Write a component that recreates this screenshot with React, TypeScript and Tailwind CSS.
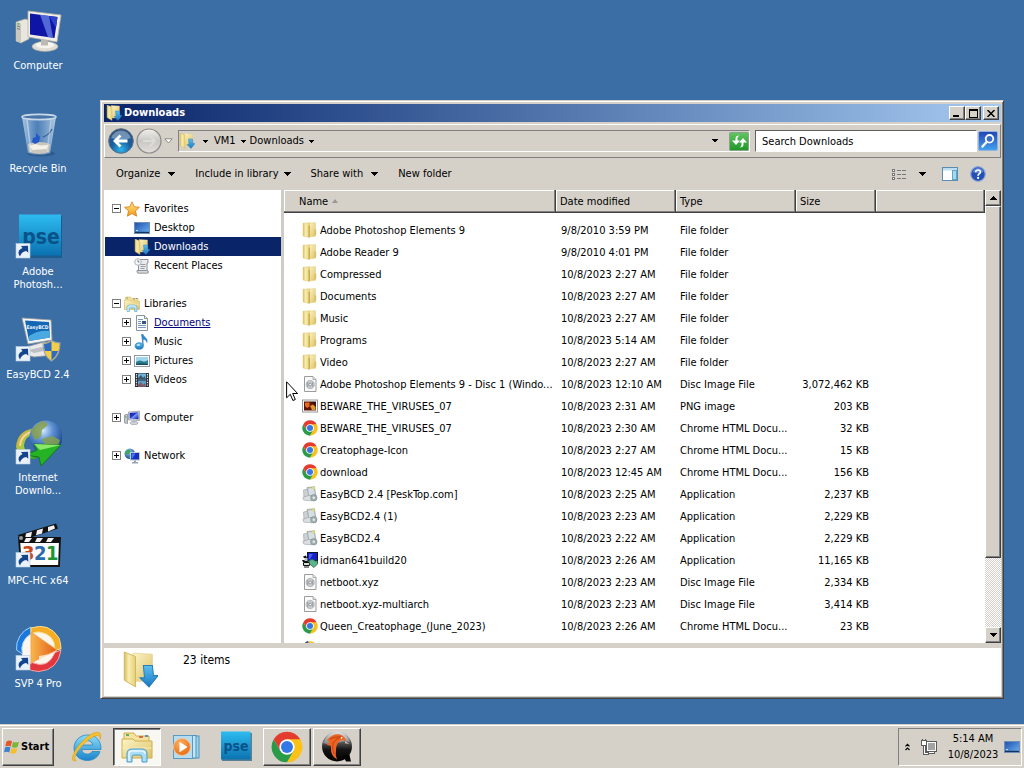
import React from 'react';

type IconProps = { className?: string };

/* ---------- shared gradients ---------- */

function Gradients() {
  return (
    <svg className="absolute h-0 w-0" aria-hidden="true">
      <defs>
        <linearGradient id="folderFront" x1="0" y1="0" x2="1" y2="0">
          <stop offset="0" stopColor="#d9bd57" />
          <stop offset="0.4" stopColor="#f8eeb4" />
          <stop offset="1" stopColor="#e6cf73" />
        </linearGradient>
        <linearGradient id="folderBack" x1="0" y1="0" x2="1" y2="1">
          <stop offset="0" stopColor="#fdf5c8" />
          <stop offset="1" stopColor="#ddc266" />
        </linearGradient>
        <linearGradient id="arrowBlue" x1="0" y1="0" x2="0" y2="1">
          <stop offset="0" stopColor="#5cc0ee" />
          <stop offset="1" stopColor="#1878c4" />
        </linearGradient>
        <linearGradient id="screenBlue" x1="0" y1="0" x2="1" y2="1">
          <stop offset="0" stopColor="#0a10a8" />
          <stop offset="0.45" stopColor="#2740d0" />
          <stop offset="0.5" stopColor="#7d9cf4" />
          <stop offset="1" stopColor="#0b12a0" />
        </linearGradient>
        <linearGradient id="deskBlue" x1="0" y1="0" x2="1" y2="1">
          <stop offset="0" stopColor="#1d4fae" />
          <stop offset="1" stopColor="#6db4f2" />
        </linearGradient>
        <linearGradient id="pseBlue" x1="0" y1="0" x2="0" y2="1">
          <stop offset="0" stopColor="#2dbcf0" />
          <stop offset="1" stopColor="#0a72b0" />
        </linearGradient>
        <linearGradient id="glass" x1="0" y1="0" x2="1" y2="0">
          <stop offset="0" stopColor="#bcd4ea" stopOpacity="0.85" />
          <stop offset="0.45" stopColor="#5b8cc4" stopOpacity="0.6" />
          <stop offset="1" stopColor="#c6daec" stopOpacity="0.85" />
        </linearGradient>
        <radialGradient id="backBall" cx="0.5" cy="0.85" r="0.8">
          <stop offset="0" stopColor="#2fb4ea" />
          <stop offset="0.5" stopColor="#1a5fa0" />
          <stop offset="1" stopColor="#2b4f7c" />
        </radialGradient>
        <linearGradient id="forwardBall" x1="0" y1="0" x2="0" y2="1">
          <stop offset="0" stopColor="#f1f0ee" />
          <stop offset="0.5" stopColor="#c9c7c4" />
          <stop offset="1" stopColor="#e2e0dd" />
        </linearGradient>
        <radialGradient id="globe" cx="0.4" cy="0.3" r="0.75">
          <stop offset="0" stopColor="#d7ecff" />
          <stop offset="0.4" stopColor="#5f92d4" />
          <stop offset="1" stopColor="#123a86" />
        </radialGradient>
        <linearGradient id="idmSwoosh" x1="0" y1="0" x2="1" y2="1">
          <stop offset="0" stopColor="#f39a4a" />
          <stop offset="0.5" stopColor="#9dd23c" />
          <stop offset="1" stopColor="#1c9a24" />
        </linearGradient>
        <linearGradient id="searchBlue" x1="0" y1="0" x2="0" y2="1">
          <stop offset="0" stopColor="#2344b4" />
          <stop offset="1" stopColor="#43a4ee" />
        </linearGradient>
        <linearGradient id="refreshGreen" x1="0" y1="0" x2="0" y2="1">
          <stop offset="0" stopColor="#63c563" />
          <stop offset="1" stopColor="#1d9626" />
        </linearGradient>
        <linearGradient id="star" x1="0" y1="0" x2="0" y2="1">
          <stop offset="0" stopColor="#ffe98c" />
          <stop offset="1" stopColor="#f59a17" />
        </linearGradient>
        <radialGradient id="orange" cx="0.4" cy="0.3" r="0.8">
          <stop offset="0" stopColor="#ffb060" />
          <stop offset="1" stopColor="#e46408" />
        </radialGradient>
        <linearGradient id="darkBall" x1="0" y1="0" x2="0" y2="1">
          <stop offset="0" stopColor="#d8d8d8" />
          <stop offset="0.35" stopColor="#5a5a5a" />
          <stop offset="0.6" stopColor="#151515" />
          <stop offset="1" stopColor="#000" />
        </linearGradient>
        <linearGradient id="ieBlue" x1="0" y1="0" x2="0" y2="1">
          <stop offset="0" stopColor="#8adcf8" />
          <stop offset="1" stopColor="#1a84cc" />
        </linearGradient>
        <linearGradient id="svpPlay" x1="0" y1="0" x2="1" y2="0">
          <stop offset="0" stopColor="#f9b64c" />
          <stop offset="1" stopColor="#e35b16" />
        </linearGradient>
      </defs>
    </svg>
  );
}

/* ---------- 16px icons ---------- */

function FolderIcon({ className = 'h-4 w-4' }: IconProps) {
  return (
    <svg viewBox="0 0 16 16" className={className} aria-hidden="true">
      <path d="M7 1l6.500-.4v13.600L7 15z" fill="url(#folderBack)" stroke="#e0cc84" strokeWidth=".5" />
      <path d="M12.500 7.500h1.700v5l-1.700 1.500z" fill="#d9c062" />
      <path d="M1 1.200L7.500.8v14.700L1 14z" fill="url(#folderFront)" stroke="#dcc87c" strokeWidth=".5" />
      <path d="M6.500 4l1.500-.6v11.400l-1.500.7z" fill="#c9ae4e" />
    </svg>
  );
}

function DownloadFolderIcon({ className = 'h-4 w-4' }: IconProps) {
  return (
    <svg viewBox="0 0 32 32" className={className} aria-hidden="true">
      <path d="M10 1l17 1v24H12z" fill="url(#folderBack)" stroke="#e2cd84" strokeWidth=".6" />
      <path d="M2 0l10 4v27L2 25z" fill="url(#folderFront)" stroke="#cdb45c" strokeWidth=".8" />
      <path d="M19 12h8l1 9h4l-8 10-8-8h4z" fill="url(#arrowBlue)" stroke="#2a7db8" strokeWidth=".9" />
    </svg>
  );
}

function StarIcon() {
  return (
    <svg viewBox="0 0 16 16" className="h-4 w-4" aria-hidden="true">
      <path d="M8 .8l2.200 4.900 5.200.6-3.900 3.600 1.100 5.300L8 12.500l-4.600 2.700 1.100-5.300L.6 6.300l5.200-.6z" fill="url(#star)" stroke="#d27a12" strokeWidth=".8" />
    </svg>
  );
}

function DesktopIcon({ className = 'h-4 w-4' }: IconProps) {
  return (
    <svg viewBox="0 0 16 16" className={className} aria-hidden="true">
      <rect x=".5" y="2.500" width="15" height="11" fill="url(#deskBlue)" stroke="#6f8fb4" />
      <path d="M1 12.400h14" stroke="#16335f" strokeWidth="1.200" />
      <path d="M2 10.600h2" stroke="#cde4fb" />
    </svg>
  );
}

function RecentIcon() {
  return (
    <svg viewBox="0 0 16 16" className="h-4 w-4" aria-hidden="true">
      <path d="M5.500 1.500h8.500v3.500h-1v9H4.500V6z" fill="#e9ecef" stroke="#8d9298" />
      <path d="M6.500 6.500h5M6.500 8.500h5M6.500 10.500h4" stroke="#979ca2" />
      <path d="M3 12.500h9.500q2 0 2 1.500t-2 1.200H4q-1.500-.5-1-2.700z" fill="#d6d9dc" stroke="#7c8085" strokeWidth=".8" />
      <circle cx="4" cy="4" r="3.300" fill="#f6f7f8" stroke="#a5acb3" strokeWidth=".9" />
      <path d="M4 2.200V4h1.500" fill="none" stroke="#5a6066" strokeWidth=".8" />
    </svg>
  );
}

function LibraryIcon({ className = 'h-4 w-4' }: IconProps) {
  return (
    <svg viewBox="0 0 32 32" className={className} aria-hidden="true">
      <path d="M3 5V2h10l2 3h13v6H3z" fill="#f3e3a0" stroke="#cfae4a" />
      <path d="M5 4h3" stroke="#3fa04b" strokeWidth="1.600" />
      <path d="M18 6h4" stroke="#c8553c" strokeWidth="1.600" />
      <path d="M24 5h3" stroke="#3f82c8" strokeWidth="1.600" />
      <path d="M1 11V8h11l2 2h17v17H1z" fill="url(#folderBack)" stroke="#cfae4a" />
      <path d="M1.500 17h29" stroke="#f7eebf" />
      <path d="M6 31v-8q0-5 5-5h10q5 0 5 5v8h-5v-5q0-2-2-2h-6q-2 0-2 2v5z" fill="#a9def7" stroke="#4a9bcc" />
      <path d="M8 30v-7q0-3 3-3h10q3 0 3 3" fill="none" stroke="#e6f7ff" strokeWidth="1.500" />
    </svg>
  );
}

function DocumentIcon() {
  return (
    <svg viewBox="0 0 16 16" className="h-4 w-4" aria-hidden="true">
      <path d="M2.500.5h8l3 3v12h-11z" fill="#fbfcfd" stroke="#8a949e" />
      <path d="M10.500.5v3h3" fill="#dfe6ee" stroke="#8a949e" />
      <path d="M4 4.500h5M4 6.500h3M4 8.500h3M4 10.500h8M4 12.500h8" stroke="#7f96b8" />
      <rect x="8" y="6" width="4" height="3" fill="#39527e" />
    </svg>
  );
}

function MusicIcon() {
  return (
    <svg viewBox="0 0 16 16" className="h-4 w-4" aria-hidden="true">
      <path d="M7.500.3h1.600c.3 2.800 4.900 3.500 3.900 8.200-.5-2-1.800-3-3.900-3.200v6.500z" fill="#2f8fd0" stroke="#226ca8" strokeWidth=".5" />
      <ellipse cx="5.200" cy="12" rx="4.100" ry="3.300" fill="url(#arrowBlue)" stroke="#226ca8" strokeWidth=".6" />
      <ellipse cx="4.400" cy="11" rx="1.700" ry="1" fill="#bfe8fb" />
    </svg>
  );
}

function PicturesIcon() {
  return (
    <svg viewBox="0 0 16 16" className="h-4 w-4" aria-hidden="true">
      <rect x=".5" y="2.500" width="15" height="11" fill="#fff" stroke="#8f9aa4" />
      <rect x="2" y="4" width="12" height="8" fill="#9fd6ee" />
      <path d="M2 9q3-2.500 6-1t6-1v5H2z" fill="#2c7f8c" />
      <path d="M2 11q4-1.500 12 0v1H2z" fill="#175064" />
    </svg>
  );
}

function VideosIcon() {
  return (
    <svg viewBox="0 0 16 16" className="h-4 w-4" aria-hidden="true">
      <rect x="1" y="1" width="14" height="14" fill="#2b2f36" />
      <rect x="4" y="1.500" width="8" height="6" fill="#6fb4d8" />
      <path d="M4 6l3-3 2 3 1.500-2L12 7.500H4z" fill="#3a5568" />
      <rect x="4" y="8.500" width="8" height="6" fill="#5aa0c8" />
      <path d="M4 13l3-3 2 3 1.500-2 1.500 3.500H4z" fill="#8c5560" />
      <path d="M2.500 2v12M13.500 2v12" stroke="#e8ecef" strokeWidth="1.200" strokeDasharray="1.400 1.200" />
    </svg>
  );
}

function SmallComputerIcon() {
  return (
    <svg viewBox="0 0 16 16" className="h-4 w-4" aria-hidden="true">
      <path d="M.5 5l3-.8v9.300l-3-.6z" fill="#c5c9cd" stroke="#7d8288" strokeWidth=".7" />
      <path d="M1 7h1.500" stroke="#3f9d4c" />
      <path d="M4.500 2l11-.8v9.300l-11-.6z" fill="#d9dde4" stroke="#8b90a0" strokeWidth=".7" />
      <path d="M5.700 3l8.800-.7v7l-8.800-.5z" fill="url(#screenBlue)" />
      <ellipse cx="10" cy="13" rx="4" ry="1.600" fill="#d5d8de" stroke="#8b90a0" strokeWidth=".6" />
      <path d="M8.700 10.300h2.600v2.400H8.700z" fill="#b2b7c4" />
    </svg>
  );
}

function NetworkIcon() {
  return (
    <svg viewBox="0 0 16 16" className="h-4 w-4" aria-hidden="true">
      <circle cx="5.800" cy="5.800" r="5.300" fill="url(#globe)" />
      <path d="M2 3q3-3 5 0L5 6 1 7zM4 9l3-1v3z" fill="#3ba85a" />
      <rect x="6.500" y="4.500" width="9" height="7.500" fill="#1231c0" stroke="#c4cad6" />
      <path d="M7.500 5.500h4l-3 5h-1z" fill="#4a76ee" />
      <path d="M10 12.500h2v1.500h2v1.500H8V14h2z" fill="#9aa3b2" />
    </svg>
  );
}

function DiscImageIcon() {
  return (
    <svg viewBox="0 0 16 16" className="h-4 w-4" aria-hidden="true">
      <path d="M2.500.5h8.500l3 3v12H2.500z" fill="#fafafa" stroke="#9c9c9c" />
      <path d="M11 .5v3h3" fill="#e4e4e4" stroke="#9c9c9c" strokeWidth=".8" />
      <circle cx="8.200" cy="8.500" r="4.200" fill="#c6cacd" stroke="#a2a6aa" strokeWidth=".6" />
      <path d="M5.500 6.200q1 2.300 0 4.600M11 6.200q-1 2.300 0 4.600" stroke="#92979b" fill="none" />
      <circle cx="8.200" cy="8.500" r="1.300" fill="#fff" stroke="#777c81" strokeWidth=".7" />
    </svg>
  );
}

function PngIcon() {
  return (
    <svg viewBox="0 0 16 16" className="h-4 w-4" aria-hidden="true">
      <rect x=".5" y="2" width="15" height="12" fill="#fff" stroke="#9a9a9a" />
      <rect x="2" y="3.500" width="12" height="9" fill="#5c1407" />
      <path d="M3 4.500h4.500v4L5 10l-2-2z" fill="#e46a1c" />
      <path d="M8 8l3-1.500L13.500 9v3H10z" fill="#e0972f" />
      <path d="M9.500 4h4v3z" fill="#25130b" />
    </svg>
  );
}

function ChromeIcon({ className = 'h-4 w-4' }: IconProps) {
  return (
    <svg viewBox="0 0 48 48" className={className} aria-hidden="true">
      <path d="M24 24L4.080 12.500A23 23 0 0143.920 12.500z" fill="#e33b2e" />
      <path d="M24 24V12.500H43.920A23 23 0 0124 47L34 29.700z" fill="#fbc116" />
      <path d="M24 24l10 5.750L24 47A23 23 0 014.080 12.500L14 29.750z" fill="#2a9c48" />
      <path d="M4.080 12.500L14 29.750 24 12.500H10z" fill="#e33b2e" />
      <circle cx="24" cy="24" r="11.500" fill="#fff" />
      <circle cx="24" cy="24" r="9" fill="#3478e8" />
    </svg>
  );
}

function InstallerIcon() {
  return (
    <svg viewBox="0 0 16 16" className="h-4 w-4" aria-hidden="true">
      <path d="M5 1.500L12.500.7l1.300 9.500L6 11z" fill="#b9c2b4" stroke="#8b958c" strokeWidth=".6" />
      <path d="M6 2.500l5.800-.6.9 6.600-5.700.7z" fill="#d6dfe6" />
      <path d="M9.500 1l3-.3.500 2.500-2 .3z" fill="#ddd774" />
      <path d="M1.500 4l4-.8 1.300 8L2 11.500z" fill="#ccd1d4" stroke="#959da3" strokeWidth=".6" />
      <path d="M.8 11.500l6-2.200 7 2.200-4.500 3.300-7.500-.7z" fill="#dcdfe2" stroke="#959da3" strokeWidth=".6" />
      <circle cx="11.800" cy="11.800" r="3.200" fill="#9fb0b4" stroke="#76848c" strokeWidth=".6" />
      <circle cx="11.800" cy="11.800" r="1.200" fill="#e8ecdc" />
    </svg>
  );
}

function IdmSetupIcon() {
  return (
    <svg viewBox="0 0 16 16" className="h-4 w-4" aria-hidden="true">
      <rect x="5.500" y=".5" width="10" height="8.500" fill="#1420c8" stroke="#10122a" />
      <path d="M7 2h4L8 7H7z" fill="#4b60f0" />
      <path d="M15.500 1v10" stroke="#111" />
      <path d="M1 4.500l3-1 1 2.500H2zM0 8h5l1.500 2H1z" fill="#111" />
      <path d="M1.500 10.500h6v3h-6z" fill="#d9d9d9" stroke="#111" />
      <path d="M2.500 6h3v3h-3z" fill="#b9c0c8" />
      <path d="M7 8.500q4-2.500 6 .5h2.500v3L12 15.500 7.500 12z" fill="#5cb48c" stroke="#1d5634" strokeWidth=".7" />
      <path d="M2 15h5" stroke="#111" />
    </svg>
  );
}

function TwoToneIcon() {
  return (
    <svg viewBox="0 0 16 16" className="h-4 w-4" aria-hidden="true">
      <circle cx="8" cy="8" r="7" fill="#efcb3b" />
      <path d="M8 8L2 4a7 7 0 014-3z" fill="#27508c" />
    </svg>
  );
}

function SmallArrow({ className = 'h-1 w-[7px]' }: IconProps) {
  return (
    <svg viewBox="0 0 7 4" className={className} aria-hidden="true" shapeRendering="crispEdges">
      <path d="M0 0h7L3.500 4z" fill="currentColor" />
    </svg>
  );
}

/* ---------- desktop icons ---------- */

function ShortcutBadge() {
  return (
    <g>
      <rect x="2" y="29.500" width="14" height="14.500" fill="#e9f1fa" stroke="#b8cbe0" strokeWidth=".6" />
      <path d="M6 42.500q-4-5.500 2.500-8.500L7 32l7-.3.300 7-2-1.700q-4.800.5-6.300 5.500z" fill="#14458c" />
    </g>
  );
}

function BigComputer() {
  return (
    <svg viewBox="0 0 48 48" className="h-12 w-12" aria-hidden="true">
      <path d="M2 14l9-3 4 1v19l-8 4-5-2z" fill="#e8e7df" stroke="#a7a69c" strokeWidth=".7" />
      <path d="M2 14l5 1.500v19.500l-5-2z" fill="#c9c8be" />
      <path d="M3 18l3 .8M3 20.500l3 .8" stroke="#7b7b74" />
      <circle cx="4.500" cy="15.800" r=".9" fill="#4ba832" />
      <ellipse cx="31" cy="38.500" rx="13" ry="5" fill="#dfddd4" stroke="#a5a39a" strokeWidth=".7" />
      <ellipse cx="31" cy="37" rx="9.500" ry="3.200" fill="#f5f4f0" />
      <path d="M27 31l7 1.500v5h-7z" fill="#bdbbb1" />
      <path d="M14 3l33 4-4 27-29-5z" fill="#f0eee6" stroke="#b5b3a8" strokeWidth=".8" />
      <path d="M16 5.500l27.500 3.500-3 21L16 26.500z" fill="#0e14a4" />
      <path d="M26 6.800l9 1.100 4 21.800-5-.8z" fill="#6b84e8" opacity=".75" />
      <path d="M35 8l8.500 1-1.500 11z" fill="#2c41cc" />
    </svg>
  );
}

function RecycleBin() {
  return (
    <svg viewBox="0 0 48 48" className="h-12 w-12" aria-hidden="true">
      <ellipse cx="27" cy="42.500" rx="14" ry="3" fill="#244a77" opacity=".5" />
      <path d="M8 6h34l-6 36q-11 4-22 0z" fill="url(#glass)" />
      <path d="M14 33q11-4 22 0l-1 8q-10 4-20 0z" fill="#c9c6bb" />
      <path d="M15.500 35l6-2 5 1.500 8-.5-2 4-14 1z" fill="#f3f1e8" />
      <path d="M18 31l1-4 3-1v-4l4 4-1 5-4 2z" fill="#2458c8" />
      <path d="M29 26q6-2 9-8" stroke="#3f6796" strokeWidth="1.500" fill="none" />
      <path d="M13 9l4 32" stroke="#edf4fb" strokeWidth="1.500" opacity=".5" />
      <path d="M37 9l-4 32" stroke="#edf4fb" strokeWidth="1.200" opacity=".4" />
      <ellipse cx="25" cy="6" rx="17" ry="2.600" fill="#4874a8" stroke="#c8d8e8" strokeWidth="1.600" />
    </svg>
  );
}

function BigPse() {
  return (
    <svg viewBox="0 0 48 48" className="h-12 w-12" aria-hidden="true">
      <rect x="5" y="2" width="43" height="42" fill="#06527f" opacity=".6" />
      <rect x="5" y=".5" width="42" height="41" fill="url(#pseBlue)" />
      <text x="27" y="30" textAnchor="middle" fontSize="21" fontWeight="bold" fontFamily="DejaVu Sans Condensed, sans-serif" fill="#08538a">pse</text>
      <ShortcutBadge />
    </svg>
  );
}

function EasyBcd() {
  return (
    <svg viewBox="0 0 48 48" className="h-12 w-12" aria-hidden="true">
      <path d="M12 30l18-5 10 4v9l-20 2-11-3z" fill="#e9e9ea" stroke="#96989c" strokeWidth=".8" />
      <path d="M14 33l14-3 6 3-14 3z" fill="#bcbfc5" />
      <path d="M8 1l29 2 1 20-24 4z" fill="#f5f5f2" stroke="#9b9da1" strokeWidth=".8" />
      <path d="M11 3.500l24 1.500 1 15.500L15 24z" fill="#1467b4" />
      <path d="M15 19q9-6 20.500-5l.5 6.500L15 24z" fill="#4aa8e2" />
      <text x="23.500" y="11.500" textAnchor="middle" fontSize="5" fontWeight="bold" fontFamily="DejaVu Sans Condensed, sans-serif" fill="#eaf6ff">EasyBCD</text>
      <path d="M29 26q5 0 8.500-2.500Q41 26 46 26q0 13-8.500 18Q29 39 29 26z" fill="#f4cf45" stroke="#9aa3ac" strokeWidth="1.200" />
      <path d="M37.500 24.500Q34 26.800 30 27q0 4 1 7h6.500z" fill="#2d6bc0" />
      <path d="M37.500 34H44q-2 6-6.500 9z" fill="#2d6bc0" />
      <ShortcutBadge />
    </svg>
  );
}

function InternetDownload() {
  return (
    <svg viewBox="0 0 48 48" className="h-12 w-12" aria-hidden="true">
      <path d="M22 8Q3 10 2 27q4 12 20 12l2-5Q10 34 10 25q1-9 12-12z" fill="url(#idmSwoosh)" />
      <path d="M22 11Q7 13 6 26" fill="none" stroke="#f7d3a0" strokeWidth="2" />
      <circle cx="32" cy="17" r="16.500" fill="url(#globe)" />
      <path d="M17 12q4-10 14-11l3 4-6 5-1 7-6 3zM28 19l10-3 8 4-3 8-9 3z" fill="#86a04c" opacity=".85" />
      <path d="M20 24l27 1-20 21-2-9q-8 0-14-4 8 0 12-3z" fill="#25b325" stroke="#0b6e12" strokeWidth=".8" />
      <path d="M20 24l27 1-21 5z" fill="#8ae76a" />
      <ShortcutBadge />
    </svg>
  );
}

function MpcHc() {
  return (
    <svg viewBox="0 0 48 48" className="h-12 w-12" aria-hidden="true">
      <path d="M4 12L42 .5l2 5L6 18z" fill="#111" />
      <path d="M12 10.500l6-1.800-1 5-6 1.800zM23 7.200l6-1.800-1 5-6 1.800zM34 4l6-1.800L41 5.500l-7 3z" fill="#f4f4f4" />
      <path d="M5 15h41l-1 28H7z" fill="#fdfdfd" stroke="#111" strokeWidth="1.800" />
      <path d="M5 14h41v6H5z" fill="#111" />
      <path d="M12 15h6l-3 4h-5zM23 15h6l-3 4h-5zM34 15h6l-3 4h-5z" fill="#f4f4f4" />
      <circle cx="7" cy="15" r="2" fill="#999" />
      <g fontSize="20" fontWeight="bold" fontFamily="DejaVu Sans Condensed, sans-serif">
        <text x="8" y="37" fill="#c84a1c">3</text>
        <text x="20" y="37" fill="#2a6cb0">2</text>
        <text x="32" y="37" fill="#1f9434">1</text>
      </g>
      <ShortcutBadge />
    </svg>
  );
}

function SvpPro() {
  return (
    <svg viewBox="0 0 48 48" className="h-12 w-12" aria-hidden="true">
      <circle cx="25" cy="22.500" r="18" fill="#fbf6ee" />
      <path d="M17 1A22.500 22.500 0 002.500 24l6 4A17 17 0 0117 8z" fill="#1c77dc" stroke="#9ed2f8" strokeWidth="1" />
      <path d="M17 2q18-6 28 10 2 6 2 11l-6 1Q41 8 25 6q-5 0-8 2z" fill="#f4ad24" stroke="#fbe08c" strokeWidth="1" />
      <path d="M47 24Q44 44 25 45.500q-8 0-13-4l6-5q16 7 23-10z" fill="#e2373f" stroke="#f8a6a0" strokeWidth="1" />
      <path d="M17 6l26 18-26 13z" fill="url(#svpPlay)" stroke="#f4a048" strokeWidth=".8" />
      <path d="M25 30q10-1 16-5l-16 9z" fill="#fff" opacity=".7" />
      <ShortcutBadge />
    </svg>
  );
}

/* ---------- taskbar icons ---------- */

function WindowsFlag() {
  return (
    <svg viewBox="0 0 16 16" className="h-4 w-4" aria-hidden="true">
      <path d="M2.500 2.500q3-1.800 5.500-.2L6.700 7.500q-2.500-1.500-5.500 0z" fill="#e2562a" />
      <path d="M9 2.800q3 1.600 6 0l-1.400 5.200q-3 1.500-5.900 0z" fill="#7cb53a" />
      <path d="M1 8.600q3-1.500 5.500 0L5.200 13.600q-2.500-1.600-5.200 0z" fill="#3b80d2" />
      <path d="M7.500 9q3 1.500 5.900 0L12 14q-3 1.500-5.800 0z" fill="#f5bf2c" />
    </svg>
  );
}

function InternetExplorer() {
  return (
    <svg viewBox="0 0 32 32" className="h-8 w-8" aria-hidden="true">
      <path d="M16.500 4C8.500 4 3 10 3 17c0 7 5.500 12.500 13.500 12.500 6 0 11-3.500 12.500-9h-8c-1 1.800-2.600 2.600-4.700 2.600-3.200 0-5.300-1.800-5.500-4.600H30C30.300 9.500 25 4 16.500 4zM10.800 14c.5-2.700 2.700-4.400 5.500-4.400s5 1.700 5.400 4.400z" fill="url(#ieBlue)" stroke="#2a86c0" strokeWidth=".8" fillRule="evenodd" />
      <path d="M5.500 29.500C2 31 .5 29 2 24.500 4.500 17 14 5.500 22.500 2 28 0 31.500 2 29 8.500c.6-4-2-4.800-6-3C15.500 9 7.500 17.500 4.500 24.500c-1.200 3-1 4.800 1 5z" fill="#f4c02c" stroke="#cf961b" strokeWidth=".5" />
    </svg>
  );
}

function MediaPlayer() {
  return (
    <svg viewBox="0 0 32 32" className="h-8 w-8" aria-hidden="true">
      <rect x="9" y="5" width="19" height="22" fill="#9fd2ee" stroke="#4f93bd" />
      <rect x="6.500" y="4.500" width="18.500" height="22.500" fill="#c4e5f5" stroke="#4f93bd" />
      <rect x="2.500" y="4.500" width="19" height="23" fill="#b6dcf0" stroke="#5b99c0" />
      <circle cx="11" cy="16" r="8.500" fill="url(#orange)" stroke="#f5c49a" />
      <path d="M8.500 10.800v10.400l8-5.200z" fill="#fff" />
    </svg>
  );
}

function TaskPse() {
  return (
    <svg viewBox="0 0 32 32" className="h-8 w-8" aria-hidden="true">
      <rect x="1" y="2" width="30" height="28" fill="#0c4a70" opacity=".6" />
      <rect x="0" y=".5" width="29.500" height="28" fill="url(#pseBlue)" />
      <text x="15" y="20" textAnchor="middle" fontSize="14" fontWeight="bold" fontFamily="DejaVu Sans Condensed, sans-serif" fill="#08538a">pse</text>
    </svg>
  );
}

function QuickBall() {
  return (
    <svg viewBox="0 0 32 32" className="h-8 w-8" aria-hidden="true">
      <circle cx="16" cy="15.500" r="15" fill="url(#darkBall)" />
      <path d="M22 24h6.500l1.500 6.500H25z" fill="#050505" />
      <path d="M2 12Q7 1 17 1q9 1 12 10-6-2-12 1t-15 0z" fill="#fff" opacity=".35" />
      <path d="M6 9Q12 2 19 3.500q5 1.500 6 6.500l-4-1q-3 .5-4.500 3.500T15 19q-1 5 1 9.500Q9 25 10 15L5.500 13.500 9 11z" fill="#ee6222" />
      <path d="M24 10l4.500 3-4.500-.8z" fill="#c9c4b8" />
      <path d="M9 8q6-3 11-2-6 2-8 6-1 6 1 11" fill="none" stroke="#b23a10" strokeWidth=".8" />
      <circle cx="20.500" cy="6.800" r=".9" fill="#fff" />
    </svg>
  );
}

/* ---------- styling helpers ---------- */

const raised =
  'border border-t-white border-l-white border-r-[#404040] border-b-[#404040] bg-[#d5d1c9] shadow-[inset_-1px_-1px_0_#808080]';

/* ---------- data ---------- */

const desktopItems: { label: string[]; icon: React.ReactNode }[] = [
  { label: ['Computer'], icon: <BigComputer /> },
  { label: ['Recycle Bin'], icon: <RecycleBin /> },
  { label: ['Adobe', 'Photosh...'], icon: <BigPse /> },
  { label: ['EasyBCD 2.4'], icon: <EasyBcd /> },
  { label: ['Internet', 'Downlo...'], icon: <InternetDownload /> },
  { label: ['MPC-HC x64'], icon: <MpcHc /> },
  { label: ['SVP 4 Pro'], icon: <SvpPro /> },
];

type TreeItem = {
  label: string;
  icon: React.ReactNode;
  depth: 0 | 1;
  toggle?: 'open' | 'closed';
  state?: 'selected' | 'link';
};

const treeGroups: TreeItem[][] = [
  [
    { label: 'Favorites', icon: <StarIcon />, depth: 0, toggle: 'open' },
    { label: 'Desktop', icon: <DesktopIcon />, depth: 1 },
    { label: 'Downloads', icon: <DownloadFolderIcon />, depth: 1, state: 'selected' },
    { label: 'Recent Places', icon: <RecentIcon />, depth: 1 },
  ],
  [
    { label: 'Libraries', icon: <LibraryIcon />, depth: 0, toggle: 'open' },
    { label: 'Documents', icon: <DocumentIcon />, depth: 1, toggle: 'closed', state: 'link' },
    { label: 'Music', icon: <MusicIcon />, depth: 1, toggle: 'closed' },
    { label: 'Pictures', icon: <PicturesIcon />, depth: 1, toggle: 'closed' },
    { label: 'Videos', icon: <VideosIcon />, depth: 1, toggle: 'closed' },
  ],
  [{ label: 'Computer', icon: <SmallComputerIcon />, depth: 0, toggle: 'closed' }],
  [{ label: 'Network', icon: <NetworkIcon />, depth: 0, toggle: 'closed' }],
];

const icons = {
  folder: <FolderIcon />,
  disc: <DiscImageIcon />,
  png: <PngIcon />,
  chrome: <ChromeIcon />,
  setup: <InstallerIcon />,
  idm: <IdmSetupIcon />,
};

type FileRow = [keyof typeof icons, string, string, string, string];

const files: FileRow[] = [
  ['folder', 'Adobe Photoshop Elements 9', '9/8/2010 3:59 PM', 'File folder', ''],
  ['folder', 'Adobe Reader 9', '9/8/2010 4:01 PM', 'File folder', ''],
  ['folder', 'Compressed', '10/8/2023 2:27 AM', 'File folder', ''],
  ['folder', 'Documents', '10/8/2023 2:27 AM', 'File folder', ''],
  ['folder', 'Music', '10/8/2023 2:27 AM', 'File folder', ''],
  ['folder', 'Programs', '10/8/2023 5:14 AM', 'File folder', ''],
  ['folder', 'Video', '10/8/2023 2:27 AM', 'File folder', ''],
  ['disc', 'Adobe Photoshop Elements 9 - Disc 1 (Windo...', '10/8/2023 12:10 AM', 'Disc Image File', '3,072,462 KB'],
  ['png', 'BEWARE_THE_VIRUSES_07', '10/8/2023 2:31 AM', 'PNG image', '203 KB'],
  ['chrome', 'BEWARE_THE_VIRUSES_07', '10/8/2023 2:30 AM', 'Chrome HTML Docu...', '32 KB'],
  ['chrome', 'Creatophage-Icon', '10/8/2023 2:27 AM', 'Chrome HTML Docu...', '15 KB'],
  ['chrome', 'download', '10/8/2023 12:45 AM', 'Chrome HTML Docu...', '156 KB'],
  ['setup', 'EasyBCD 2.4 [PeskTop.com]', '10/8/2023 2:25 AM', 'Application', '2,237 KB'],
  ['setup', 'EasyBCD2.4 (1)', '10/8/2023 2:23 AM', 'Application', '2,229 KB'],
  ['setup', 'EasyBCD2.4', '10/8/2023 2:22 AM', 'Application', '2,229 KB'],
  ['idm', 'idman641build20', '10/8/2023 2:26 AM', 'Application', '11,165 KB'],
  ['disc', 'netboot.xyz', '10/8/2023 2:23 AM', 'Disc Image File', '2,334 KB'],
  ['disc', 'netboot.xyz-multiarch', '10/8/2023 2:23 AM', 'Disc Image File', '3,414 KB'],
  ['chrome', 'Queen_Creatophage_(June_2023)', '10/8/2023 2:26 AM', 'Chrome HTML Docu...', '23 KB'],
];

/* ---------- window parts ---------- */

function TitleBar() {
  return (
    <header className="flex h-[18px] shrink-0 items-center bg-linear-to-r from-[#0a246a] to-[#a6caf0] pr-0.5 pl-0.5">
      <DownloadFolderIcon />
      <h1 className="ml-0.5 flex-1 text-[11px] font-bold text-white">Downloads</h1>
      <button aria-label="Minimize" className={`flex h-[14px] w-4 items-end justify-center pb-0.5 ${raised}`}>
        <span className="mr-0.5 h-0.5 w-1.5 bg-black" />
      </button>
      <button aria-label="Maximize" className={`flex h-[14px] w-4 items-center justify-center ${raised}`}>
        <span className="h-[9px] w-[9px] border border-t-2 border-black" />
      </button>
      <button aria-label="Close" className={`ml-0.5 flex h-[14px] w-4 items-center justify-center ${raised}`}>
        <svg viewBox="0 0 8 7" className="h-[7px] w-2" aria-hidden="true">
          <path d="M.5 0l7 7M7.500 0l-7 7" stroke="#000" strokeWidth="1.500" />
        </svg>
      </button>
    </header>
  );
}

function Navigation() {
  return (
    <div className="mt-0.5 flex h-[34px] shrink-0 items-center border border-t-white border-r-[#808080] border-b-[#808080] border-l-white pr-0.5 pl-[3px]">
      <button aria-label="Back" className="shrink-0">
        <svg viewBox="0 0 26 26" className="h-[26px] w-[26px]" aria-hidden="true">
          <circle cx="13" cy="13" r="12.300" fill="url(#backBall)" stroke="#5f7185" />
          <path d="M3 10Q6 2.500 13 2.500T23 10q-10 4-20 0z" fill="#fff" opacity=".35" />
          <path d="M12.500 7.500L7 13l5.500 5.500M7 13h12.500" fill="none" stroke="#fff" strokeWidth="2.800" />
        </svg>
      </button>
      <button aria-label="Forward" className="ml-0.5 shrink-0">
        <svg viewBox="0 0 26 26" className="h-[26px] w-[26px]" aria-hidden="true">
          <circle cx="13" cy="13" r="12" fill="url(#forwardBall)" stroke="#8d8b88" strokeWidth="1.200" />
          <path d="M13.500 7.500l5.500 5.500-5.500 5.500M18 13H7" fill="none" stroke="#dddbd8" strokeWidth="2" />
        </svg>
      </button>
      <button aria-label="Recent pages" className="ml-0.5 shrink-0">
        <svg viewBox="0 0 9 6" className="h-1.5 w-[9px]" aria-hidden="true">
          <path d="M.8.8h7.400L4.500 5z" fill="#fff" stroke="#77756f" strokeWidth=".8" />
        </svg>
      </button>
      <div className="ml-[5px] flex h-[22px] flex-1 items-center border border-t-[#808080] border-r-white border-b-white border-l-[#808080]">
        <DownloadFolderIcon className="h-4 w-4" />
        <button aria-label="Locations" className="ml-1.5 px-0.5">
          <SmallArrow className="h-[3px] w-[5px]" />
        </button>
        <button className="ml-1 flex items-center gap-[5px]">
          VM1 <SmallArrow className="h-[3px] w-[5px]" />
        </button>
        <button className="ml-1 flex items-center gap-[5px]">
          Downloads <SmallArrow className="h-[3px] w-[5px]" />
        </button>
        <button aria-label="Previous locations" className="mr-2 ml-auto">
          <SmallArrow className="h-1 w-2" />
        </button>
        <button aria-label="Refresh" className="ml-0.5 shrink-0">
          <svg viewBox="0 0 20 19" className="h-[19px] w-5" aria-hidden="true">
            <rect x=".5" y=".5" width="19" height="18" rx="1" fill="url(#refreshGreen)" stroke="#8aa48c" />
            <path d="M6.500 8.500H3L7 13l4-4.500H8.500V6q0-1.500 2-2.500-4 0-4 3z" fill="#fff" />
            <path d="M14.500 10.500H18L14 6l-4 4.500h2.500V13q0 1.500-2 2.500 4 0 4-3z" fill="#fff" />
          </svg>
        </button>
      </div>
      <input
        aria-label="Search Downloads"
        placeholder="Search Downloads"
        className="ml-[5px] h-[22px] w-[222px] border border-t-[#606060] border-r-white border-b-white border-l-[#606060] bg-white px-1.5 text-[11px] outline-none placeholder:text-black"
      />
      <button aria-label="Search" className="ml-px shrink-0">
        <svg viewBox="0 0 20 20" className="h-5 w-5" aria-hidden="true">
          <rect x=".5" y=".5" width="19" height="19" rx="1.500" fill="url(#searchBlue)" stroke="#8fb2e0" />
          <circle cx="11.500" cy="7.800" r="3.800" fill="#3a6cc8" stroke="#fff" strokeWidth="1.800" />
          <path d="M8.800 10.800L4.500 15.500" stroke="#fff" strokeWidth="2.400" strokeLinecap="round" />
        </svg>
      </button>
    </div>
  );
}

function CommandBar() {
  return (
    <div className="flex h-8 shrink-0 items-center pr-[15px] pl-3">
      <button className="flex items-center gap-2">
        Organize <SmallArrow />
      </button>
      <button className="ml-5 flex items-center gap-[5px]">
        Include in library <SmallArrow />
      </button>
      <button className="ml-5 flex items-center gap-2">
        Share with <SmallArrow />
      </button>
      <button className="ml-5">New folder</button>
      <button aria-label="Change view" className="ml-auto">
        <svg viewBox="0 0 16 13" className="h-[13px] w-4" aria-hidden="true" shapeRendering="crispEdges">
          <path d="M1.500 1.500h2v2h-2zM1.500 5.500h2v2h-2zM1.500 9.500h2v2h-2z" fill="#fff" stroke="#777" />
          <path d="M6 2.500h4m1 0h4M6 6.500h4m1 0h4M6 10.500h4m1 0h4" stroke="#777" />
        </svg>
      </button>
      <button aria-label="View options" className="ml-3">
        <SmallArrow />
      </button>
      <button aria-label="Preview pane" className="ml-4">
        <svg viewBox="0 0 16 14" className="h-[14px] w-4" aria-hidden="true">
          <rect x=".5" y=".5" width="15" height="13" fill="#fff" stroke="#5b8db0" />
          <rect x="1" y="1" width="14" height="2.500" fill="#bfdff0" />
          <rect x="10" y="3" width="5" height="10" fill="#5fa6cc" />
          <rect x="11" y="4" width="3" height="8" fill="#a5d8ee" />
        </svg>
      </button>
      <button aria-label="Help" className="ml-3">
        <svg viewBox="0 0 16 16" className="h-4 w-4" aria-hidden="true">
          <circle cx="8" cy="8" r="7.300" fill="#2450b4" stroke="#8fa6d8" strokeWidth="1.200" />
          <path d="M2.500 6Q4 2 8 2t5.500 4q-5 2-11 0z" fill="#7ea4ea" opacity=".6" />
          <path d="M5.700 6.300Q5.800 4 8.100 4t2.300 2.100Q10.400 7.400 9 8q-.9.500-.9 1.700" fill="none" stroke="#fff" strokeWidth="1.700" />
          <circle cx="8.100" cy="11.900" r="1.100" fill="#fff" />
        </svg>
      </button>
    </div>
  );
}

function Toggle({ kind }: { kind: 'open' | 'closed' }) {
  return (
    <svg viewBox="0 0 9 9" className="h-[9px] w-[9px] shrink-0" aria-hidden="true" shapeRendering="crispEdges">
      <rect x=".5" y=".5" width="8" height="8" fill="#fff" stroke="#808080" />
      <path d={kind === 'open' ? 'M2 4.500h5' : 'M2 4.500h5M4.500 2v5'} stroke="#000" />
    </svg>
  );
}

function TreeRow({ item }: { item: TreeItem }) {
  const indent = item.depth === 0 ? 'pl-[7px]' : 'pl-[17px]';
  const tone = item.state === 'selected' ? 'bg-[#0a246a] text-white' : item.state === 'link' ? 'text-[#00007a] underline' : '';
  return (
    <li>
      <button className={`flex h-[19px] w-full items-center ${indent} ${tone}`}>
        <span className="flex w-[9px]">{item.toggle && <Toggle kind={item.toggle} />}</span>
        <span className="mr-1 ml-[3px]">{item.icon}</span>
        <span className="pt-0.5">{item.label}</span>
      </button>
    </li>
  );
}

function NavigationPane() {
  return (
    <nav className="w-[177px] shrink-0 bg-white pt-[9px] pl-px">
      <div className="flex flex-col gap-[19px]">
        {treeGroups.map((group) => (
          <ul key={group[0].label}>
            {group.map((item) => (
              <TreeRow key={item.label} item={item} />
            ))}
          </ul>
        ))}
      </div>
    </nav>
  );
}

const headCell =
  'h-[23px] border-b border-r border-[#404040] bg-[#d5d1c9] px-1 pt-0.5 text-left font-normal shadow-[inset_-1px_-1px_0_#808080,inset_1px_1px_0_#ffffff]';

function FileList() {
  return (
    <div className="min-w-0 flex-1 overflow-hidden bg-white">
      <table className="w-full table-fixed border-separate border-spacing-0">
        <colgroup>
          <col className="w-[272px]" />
          <col className="w-[120px]" />
          <col className="w-[120px]" />
          <col className="w-20" />
          <col />
        </colgroup>
        <thead>
          <tr>
            <th className={headCell}>
              <span className="flex items-center gap-1 pl-[11px]">
                Name
                <svg viewBox="0 0 6 4" className="mb-0.5 h-1 w-1.5" aria-hidden="true">
                  <path d="M0 4l3-4 3 4z" fill="#9a978f" />
                </svg>
              </span>
            </th>
            <th className={headCell}>Date modified</th>
            <th className={headCell}>Type</th>
            <th className={headCell}>Size</th>
            <th className={headCell} aria-label="Empty column" />
          </tr>
        </thead>
        <tbody>
          <tr className="h-1.5">
            <td colSpan={5} />
          </tr>
          {files.map(([icon, name, date, type, size]) => (
            <tr key={name + icon}>
              <td className="h-[22px] pl-[18px]">
                <span className="flex items-center gap-0.5 whitespace-nowrap">
                  <span className="shrink-0">{icons[icon]}</span>
                  <span className="pt-0.5">{name}</span>
                </span>
              </td>
              <td className="pt-0.5 pl-[5px] whitespace-nowrap">{date}</td>
              <td className="pt-0.5 pl-1 whitespace-nowrap">{type}</td>
              <td className="pt-0.5 pr-[7px] text-right whitespace-nowrap">{size}</td>
              <td />
            </tr>
          ))}
          <tr>
            <td className="h-[22px] pl-[18px]">
              <TwoToneIcon />
            </td>
            <td colSpan={4} />
          </tr>
        </tbody>
      </table>
    </div>
  );
}

function ScrollBar() {
  return (
    <div className="flex w-4 shrink-0 flex-col bg-[repeating-conic-gradient(#ffffff_0_25%,#d5d1c9_0_50%)] bg-size-[2px_2px]">
      <button aria-label="Scroll up" className={`flex h-4 shrink-0 items-center justify-center ${raised}`}>
        <SmallArrow className="h-1 w-[7px] rotate-180" />
      </button>
      <div className={`h-[352px] shrink-0 ${raised}`} />
      <button aria-label="Scroll down" className={`mt-auto flex h-4 shrink-0 items-center justify-center ${raised}`}>
        <SmallArrow />
      </button>
    </div>
  );
}

function ExplorerWindow() {
  return (
    <section
      aria-label="Downloads"
      className="absolute top-[100px] right-5 bottom-[25px] left-[100px] flex flex-col border border-t-[#d5d1c9] border-r-[#404040] border-b-[#404040] border-l-[#d5d1c9] bg-[#d5d1c9] p-[3px] pr-0.5 pb-0.5 shadow-[inset_1px_1px_0_#ffffff,inset_-1px_-1px_0_#808080]"
    >
      <TitleBar />
      <Navigation />
      <CommandBar />
      <div className="flex min-h-0 flex-1 overflow-hidden">
        <NavigationPane />
        <div className="w-[3px] shrink-0 bg-[#cfccc6]" />
        <FileList />
        <ScrollBar />
      </div>
      <footer className="mt-[5px] flex h-12 shrink-0 items-start bg-white">
        <DownloadFolderIcon className="mt-0.5 ml-[18px] h-10 w-9" />
        <p className="mt-[3px] ml-[25px] text-[12px]">23 items</p>
      </footer>
    </section>
  );
}

/* ---------- taskbar ---------- */

function Taskbar() {
  const slot = 'flex w-12 items-center justify-center border border-transparent';
  return (
    <footer className="flex h-11 shrink-0 border-t border-[#d5d1c9] bg-[#d5d1c9] pr-0.5 pb-0.5 pl-0.5 shadow-[inset_0_1px_0_#ffffff]">
      <button className={`mt-[3px] flex w-[52px] items-center gap-px pl-px text-[11px] font-bold ${raised}`}>
        <WindowsFlag />
        Start
      </button>
      <div className="mt-[3px] ml-[9px] flex gap-0.5">
        <button aria-label="Internet Explorer" className={slot}>
          <InternetExplorer />
        </button>
        <button
          aria-label="Windows Explorer"
          className="flex w-12 items-center justify-center border border-t-[#404040] border-r-white border-b-white border-l-[#404040] bg-[#f8f7f2] shadow-[inset_1px_1px_0_#808080]"
        >
          <LibraryIcon className="h-8 w-8" />
        </button>
        <button aria-label="Media Player" className={slot}>
          <MediaPlayer />
        </button>
        <button aria-label="Photoshop Elements" className={slot}>
          <TaskPse />
        </button>
        <button aria-label="Chrome" className={`flex w-12 items-center justify-center ${raised}`}>
          <ChromeIcon className="h-8 w-8" />
        </button>
        <button aria-label="Quick launcher" className={`flex w-12 items-center justify-center ${raised}`}>
          <QuickBall />
        </button>
      </div>
      <div className="mt-[3px] ml-auto flex w-[124px] items-center border border-t-[#808080] border-r-white border-b-white border-l-[#808080] pl-1.5">
        <button aria-label="Show hidden icons">
          <svg viewBox="0 0 5 8" className="h-2 w-[5px]" aria-hidden="true">
            <path d="M.5 3.300l2-2 2 2M.5 7l2-2 2 2" fill="none" stroke="#000" strokeWidth="1.200" />
          </svg>
        </button>
        <svg viewBox="0 0 16 16" className="ml-[11px] h-4 w-4" aria-hidden="true" shapeRendering="crispEdges">
          <rect x="5.500" y="2.500" width="10" height="10" fill="#fff" stroke="#5c5c5c" />
          <rect x="7" y="4" width="7" height="7" fill="#a3a3a3" />
          <rect x="7.500" y="12.500" width="6" height="2" fill="#fff" stroke="#5c5c5c" />
          <path d="M2.500 6.500h2v7h3v1.500h-5z" fill="#fff" stroke="#5c5c5c" />
          <rect x=".5" y="1.500" width="5" height="5" fill="#fff" stroke="#5c5c5c" />
          <path d="M1.500 0v2M4.500 0v2" stroke="#5c5c5c" />
        </svg>
        <time className="ml-2 w-14 text-center leading-4 whitespace-nowrap">
          5:14 AM
          <br />
          10/8/2023
        </time>
        <DesktopIcon className="ml-[3px] h-4 w-4" />
      </div>
    </footer>
  );
}

/* ---------- page ---------- */

export default function App() {
  return (
    <div className="flex h-screen flex-col overflow-hidden bg-[#3a6ea5] font-['DejaVu_Sans_Condensed','Noto_Sans',sans-serif] text-[11px] text-black">
      <Gradients />
      <main className="relative min-h-0 flex-1">
        <ul className="flex w-[76px] flex-col">
          {desktopItems.map(({ label, icon }) => (
            <li key={label.join(' ')} className="h-[103px] pt-2">
              <button className="flex w-full flex-col items-center gap-[3px] text-white">
                {icon}
                <span className="leading-[13px] whitespace-pre-line">{label.join('\n')}</span>
              </button>
            </li>
          ))}
        </ul>
        <ExplorerWindow />
        <svg viewBox="0 0 12 21" className="absolute top-[381px] left-[286px] h-[21px] w-3" aria-hidden="true">
          <path d="M.6.8v16l3.700-3.500 2.600 6.200 2.400-1-2.600-6h4.900z" fill="#fff" stroke="#000" strokeWidth="1" />
        </svg>
      </main>
      <Taskbar />
    </div>
  );
}
